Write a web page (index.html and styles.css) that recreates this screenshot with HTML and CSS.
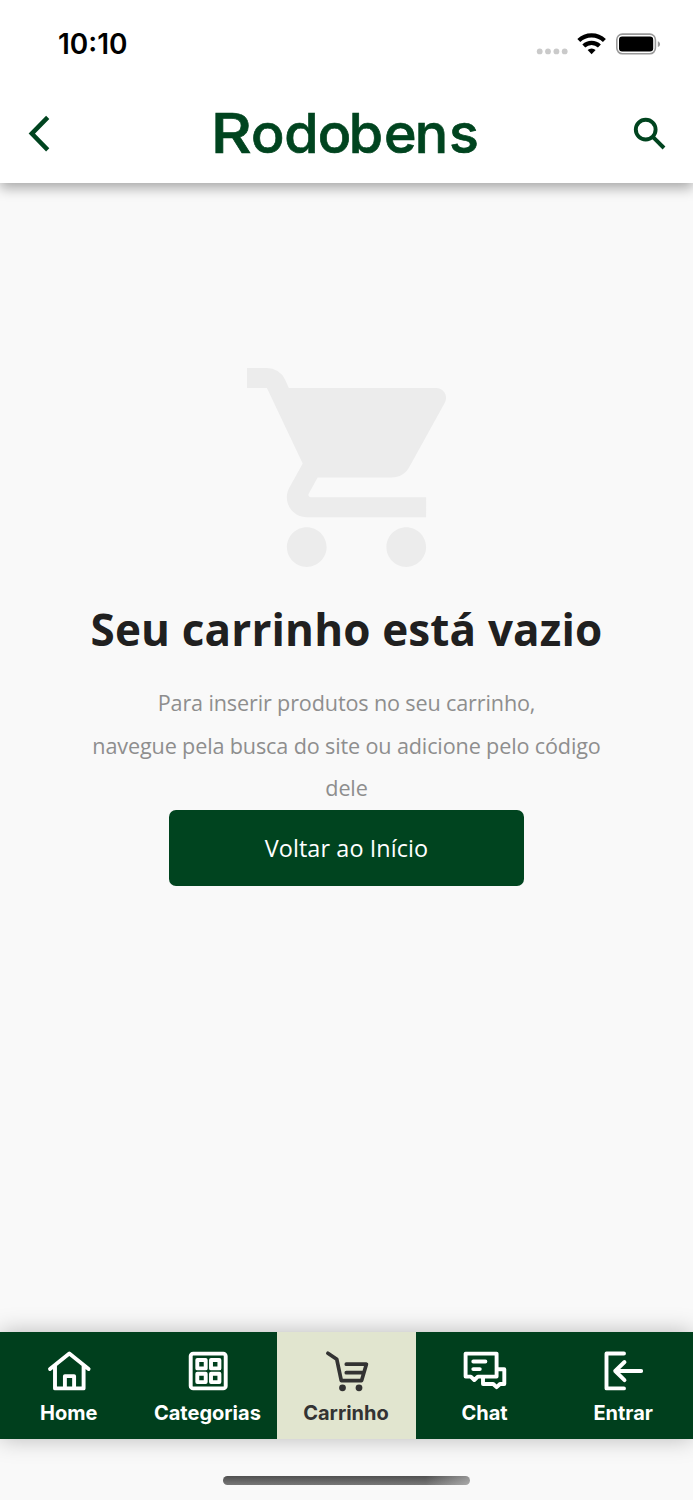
FILE: index.html
```html
<!DOCTYPE html>
<html lang="pt-BR">
<head>
<meta charset="utf-8">
<title>Rodobens - Carrinho</title>
<link rel="stylesheet" href="styles.css">
</head>
<body>
<div class="screen">
  <header class="top">
    <div class="status">
      <span class="time">10:10</span>
      <svg class="status-icons" viewBox="536 30 126 28" width="126" height="28">
        <g fill="#cacaca"><circle cx="539.7" cy="51.4" r="2.9"/><circle cx="548" cy="51.4" r="2.9"/><circle cx="556.4" cy="51.4" r="2.9"/><circle cx="564.7" cy="51.4" r="2.9"/></g>
        <g fill="none" stroke="#000" stroke-width="4.2">
          <path d="M578.8 40.6a18.2 18.2 0 0 1 25.6 0"/>
          <path d="M583.8 46a11.2 11.2 0 0 1 15.6 0"/>
        </g>
        <path d="M591.6 54.2l-4-4.2a5.8 5.8 0 0 1 8 0z"/>
        <rect x="616.8" y="34.1" width="38.6" height="19.6" rx="5.6" fill="none" stroke="#999" stroke-width="1.6"/>
        <rect x="619" y="36.6" width="34.2" height="14.8" rx="3.2"/>
        <path d="M657.8 41.2c3 .8 3 5 0 5.8z" fill="#999"/>
      </svg>
    </div>
    <div class="bar">
      <svg class="back" viewBox="26 114 28 40" width="28" height="40"><path d="M47.7 117.4L31.8 133.6L47.7 149.8"/></svg>
      <svg class="logo" viewBox="208 104 270 60" width="270" height="60" role="img" aria-label="Rodobens"><text y="153.2"><tspan x="210.8" textLength="41" lengthAdjust="spacingAndGlyphs">R</tspan><tspan x="251 284.2 317.8 348.8 384 414.8 449">odobens</tspan></text></svg>
      <svg class="search" viewBox="632 114 36 38" width="36" height="38"><circle cx="645.7" cy="128.6" r="9.9"/><path d="M652.6 135.6L664 147"/></svg>
    </div>
  </header>

  <main class="empty">
    <svg class="cart" viewBox="1 2 20 20" width="199" height="199"><path d="M7 18c-1.1 0-1.99.9-1.99 2S5.9 22 7 22s2-.9 2-2-.9-2-2-2zM1 2v2h2l3.6 7.59-1.35 2.45c-.16.28-.25.61-.25.96 0 1.1.9 2 2 2h12v-2H7.42c-.14 0-.25-.11-.25-.25l.03-.12.9-1.63h7.45c.75 0 1.41-.41 1.75-1.03l3.58-6.49A1 1 0 0 0 20 4H5.21l-.4-.86A2 2 0 0 0 3 2H1zm16 16c-1.1 0-1.99.9-1.99 2s.89 2 1.99 2 2-.9 2-2-.9-2-2-2z"/></svg>
    <h1 class="title">Seu carrinho está vazio</h1>
    <p class="text">Para inserir produtos no seu carrinho,<br>navegue pela busca do site ou adicione pelo código<br>dele</p>
    <a class="button">Voltar ao Início</a>
  </main>

  <nav class="tabs">
    <a class="tab">
      <svg class="icon" viewBox="0 0 46 46"><path d="M4 21L23.3 5.6 42.6 21M9 18V40.4H37.6V18M18.9 40V28.1H28.1V40"/></svg>
      <span class="label">Home</span>
    </a>
    <a class="tab">
      <svg class="icon" viewBox="0 0 46 46"><rect x="5.7" y="5.6" width="35" height="34.8" rx="2.5"/><path d="M12.3 12h8.4v8.4h-8.4zM26 12h8.4v8.4H26zM12.3 25.7h8.4v8.4h-8.4zM26 25.7h8.4v8.4H26z"/></svg>
      <span class="label">Categorias</span>
    </a>
    <a class="tab active">
      <svg class="icon" viewBox="0 0 46 46"><path d="M4.9 5.3L13.8 11.3 18.3 32.6H38.6L43.4 16.2H23.3M23.3 24.7H40.5"/><circle class="wheel" cx="19.5" cy="39.8" r="3.4"/><circle class="wheel" cx="36" cy="39.8" r="3.4"/></svg>
      <span class="label">Carrinho</span>
    </a>
    <a class="tab">
      <svg class="icon" viewBox="0 0 46 46"><path d="M3.6 5.6H34.6V28.6H15.8L12.3 32 8.8 28.6H3.6zM34.6 21.2H42.3V36H38L34.6 39.2 31.2 36H21V29M11.3 13.5H23.4M11.3 21.1H17.8"/></svg>
      <span class="label">Chat</span>
    </a>
    <a class="tab">
      <svg class="icon" viewBox="0 0 46 46"><path d="M23 5.5H5.5V40.4H23M40.2 23H14.2M23.5 14L14.2 23 23.5 32.2"/></svg>
      <span class="label">Entrar</span>
    </a>
  </nav>
  <footer class="foot"><div class="indicator"></div></footer>
</div>
</body>
</html>
```
FILE: styles.css
```css
* { box-sizing: border-box; }
body { margin: 0; background: #f9f9f9; font-family: "Open Sans", sans-serif; }
.screen { width: 693px; height: 1500px; display: flex; flex-direction: column; overflow: hidden; background: #f9f9f9; }
.top { height: 183px; flex: none; background: #fff; box-shadow: 0 5px 12px rgba(0,0,0,.33); }
.status { height: 88px; padding: 0 31px 0 58px; display: flex; align-items: center; justify-content: space-between; }
.time { font: 600 28px/34px Inter, sans-serif; color: #000; }
.bar { height: 92px; padding: 0 25px 0 26px; display: flex; align-items: center; justify-content: space-between; }
.back, .search { fill: none; stroke: #00441f; stroke-width: 3.9; }
.back { stroke-width: 4.5; }
.logo { font: 500 55.5px Inter, sans-serif; fill: #00441f; stroke: #00441f; stroke-width: .7; overflow: visible; }
.empty { flex: 1; display: flex; flex-direction: column; align-items: center; padding-top: 185px; }
.cart { fill: #ececec; }
.title { margin: 32px 0 0; font-size: 44px; line-height: 60px; font-weight: 700; color: #202020; white-space: nowrap; letter-spacing: .15px; }
.text { margin: 23px 0 0; font-size: 21.6px; line-height: 42.7px; letter-spacing: -.14px; color: #8e8e8e; text-align: center; white-space: nowrap; }
.button { width: 355px; height: 76px; margin-top: -.4px; border-radius: 7px; background: #00441f; color: #fff; font-size: 23.4px; line-height: 76px; text-align: center; letter-spacing: .1px; }
.tabs { height: 107px; flex: none; display: grid; grid-template-columns: repeat(5, 1fr); background: #003f1d; box-shadow: 0 0 22px rgba(0,0,0,.26); }
.tab { padding-top: 16px; display: flex; flex-direction: column; align-items: center; color: #fff; }
.active { background: #e1e5cf; color: #333; }
.icon { width: 46px; height: 46px; fill: none; stroke: currentColor; stroke-width: 3.9; stroke-linecap: round; stroke-linejoin: round; }
.wheel { fill: currentColor; stroke: none; }
.label { margin: 6px 1px 0 0; font: 700 20px/26px Inter, sans-serif; }
.active .icon { stroke-width: 3.7; }
.foot { height: 61px; flex: none; display: flex; justify-content: center; padding-top: 37px; }
.indicator { width: 247px; height: 9px; border-radius: 5px; background: linear-gradient(90deg, transparent 82%, rgba(255,255,255,.38)), linear-gradient(#505050, #777); }
```
